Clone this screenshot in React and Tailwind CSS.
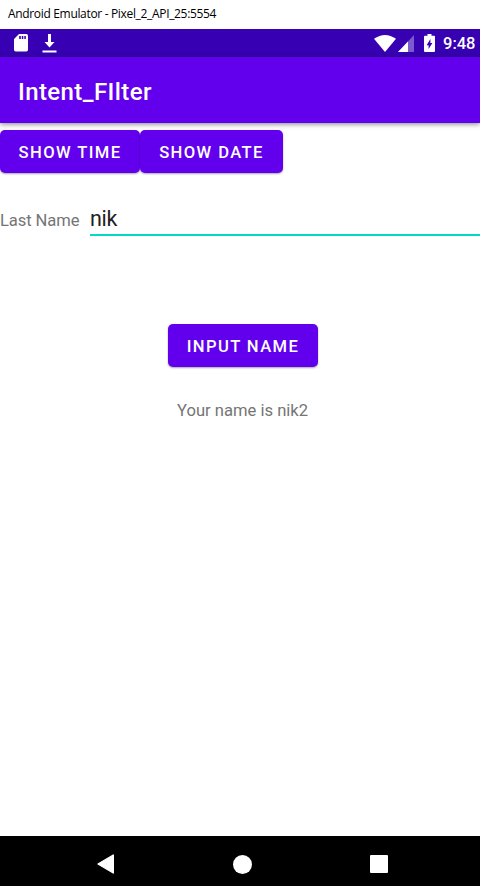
import React from "react";

function SdCardIcon() {
  return (
    <svg className="ml-[14px] h-[18px] w-[14px]" viewBox="0 0 14 18" fill="white">
      <path
        fillRule="evenodd"
        d="M5 0H12.3Q14 0 14 1.7V15.8Q14 17.5 12.3 17.5H1.7Q0 17.5 0 15.8V5ZM5.2 2V5H6.8V2ZM7.8 2V5H9.3V2ZM10.3 2V5H11.8V2Z"
      />
    </svg>
  );
}

function DownloadIcon() {
  return (
    <svg className="ml-[14px] h-[19px] w-[15px]" viewBox="0 0 15 19" fill="white">
      <path d="M6 0H9V8H12.5L7.5 13.5L2.5 8H6ZM0.5 16.5H14.5V18.5H0.5Z" />
    </svg>
  );
}

function StatusBar() {
  return (
    <div className="flex h-7 shrink-0 items-center bg-[#3700b3]">
      <SdCardIcon />
      <DownloadIcon />
      <svg className="ml-[317px] h-[17px] w-[22px]" viewBox="0 0 22 17" fill="white">
        <path d="M0 3.8Q11 -3.8 22 3.8L11 17Z" />
      </svg>
      <svg className="ml-[2px] h-[17px] w-[16px]" viewBox="0 0 16 17" fill="white">
        <path fillOpacity="0.35" d="M16 0V17H0Z" />
        <path d="M10 6.5V17H0Z" />
      </svg>
      <svg className="ml-[10px] h-[18px] w-[11px]" viewBox="0 0 11 18">
        <path fill="white" d="M3.5 0H7.5V1.8H10Q11 1.8 11 2.8V17Q11 18 10 18H1Q0 18 0 17V2.8Q0 1.8 1 1.8H3.5Z" />
        <path fill="#3700b3" d="M6.4 5V9H8.4L4.6 15V11.3H2.6Z" />
      </svg>
      <span className="ml-2 pt-[2px] text-[16.5px] leading-none font-medium whitespace-nowrap text-white">9:48</span>
    </div>
  );
}

function Button({ className, children }) {
  return (
    <button
      className={`h-[43px] rounded-[5px] bg-[#6200ee] pt-[3px] text-[16.6px] leading-none font-medium tracking-[1.4px] whitespace-nowrap text-white shadow-[0_1px_2px_rgba(0,0,0,0.35)] ${className}`}
    >
      {children}
    </button>
  );
}

export default function App() {
  return (
    <div className="flex h-[886px] w-[480px] flex-col overflow-hidden bg-white font-['Roboto',sans-serif]">
      <div className="flex h-[29px] shrink-0 items-center pb-px pl-2 font-['Open_Sans',sans-serif] text-[12px] leading-none tracking-[-0.33px] whitespace-nowrap text-black">
        Android Emulator - Pixel_2_API_25:5554
      </div>
      <StatusBar />
      <header className="flex h-[66px] shrink-0 items-center bg-[#6200ee] pt-[3px] pl-[18px] shadow-[0_1px_5px_rgba(0,0,0,0.5)]">
        <h1 className="text-[24px] leading-none font-medium tracking-[0.4px] whitespace-nowrap text-white">
          Intent_FIlter
        </h1>
      </header>
      <main className="flex grow flex-col">
        <div className="mt-[7px] flex">
          <Button className="w-[140px]">SHOW TIME</Button>
          <Button className="w-[143px]">SHOW DATE</Button>
        </div>
        <div className="mt-[26px] flex h-[38px]">
          <span className="w-[90px] pt-[14px] text-[16.6px] leading-none tracking-[-0.1px] whitespace-nowrap text-[#757575]">
            Last Name
          </span>
          <div className="h-[37px] flex-1 border-b-2 border-[#03dac5] pt-[9px] text-[21.5px] leading-none tracking-[-0.3px] text-[#212121]">
            nik
          </div>
        </div>
        <div className="mt-[87px] ml-[168px] flex">
          <Button className="w-[150px]">INPUT NAME</Button>
        </div>
        <p className="mt-[36px] ml-[177px] text-[16.6px] leading-none whitespace-nowrap text-[#757575]">
          Your name is nik2
        </p>
      </main>
      <nav className="flex h-[50px] shrink-0 items-center bg-black pt-[6px] pl-[97px]">
        <svg className="h-5 w-[18px]" viewBox="0 0 18 20">
          <path d="M1 10L16.3 1V19Z" fill="white" stroke="white" strokeWidth="1.4" strokeLinejoin="round" />
        </svg>
        <div className="ml-[118px] size-[19px] rounded-full bg-white" />
        <div className="ml-[118px] size-[18px] rounded-[1px] bg-white" />
      </nav>
    </div>
  );
}
